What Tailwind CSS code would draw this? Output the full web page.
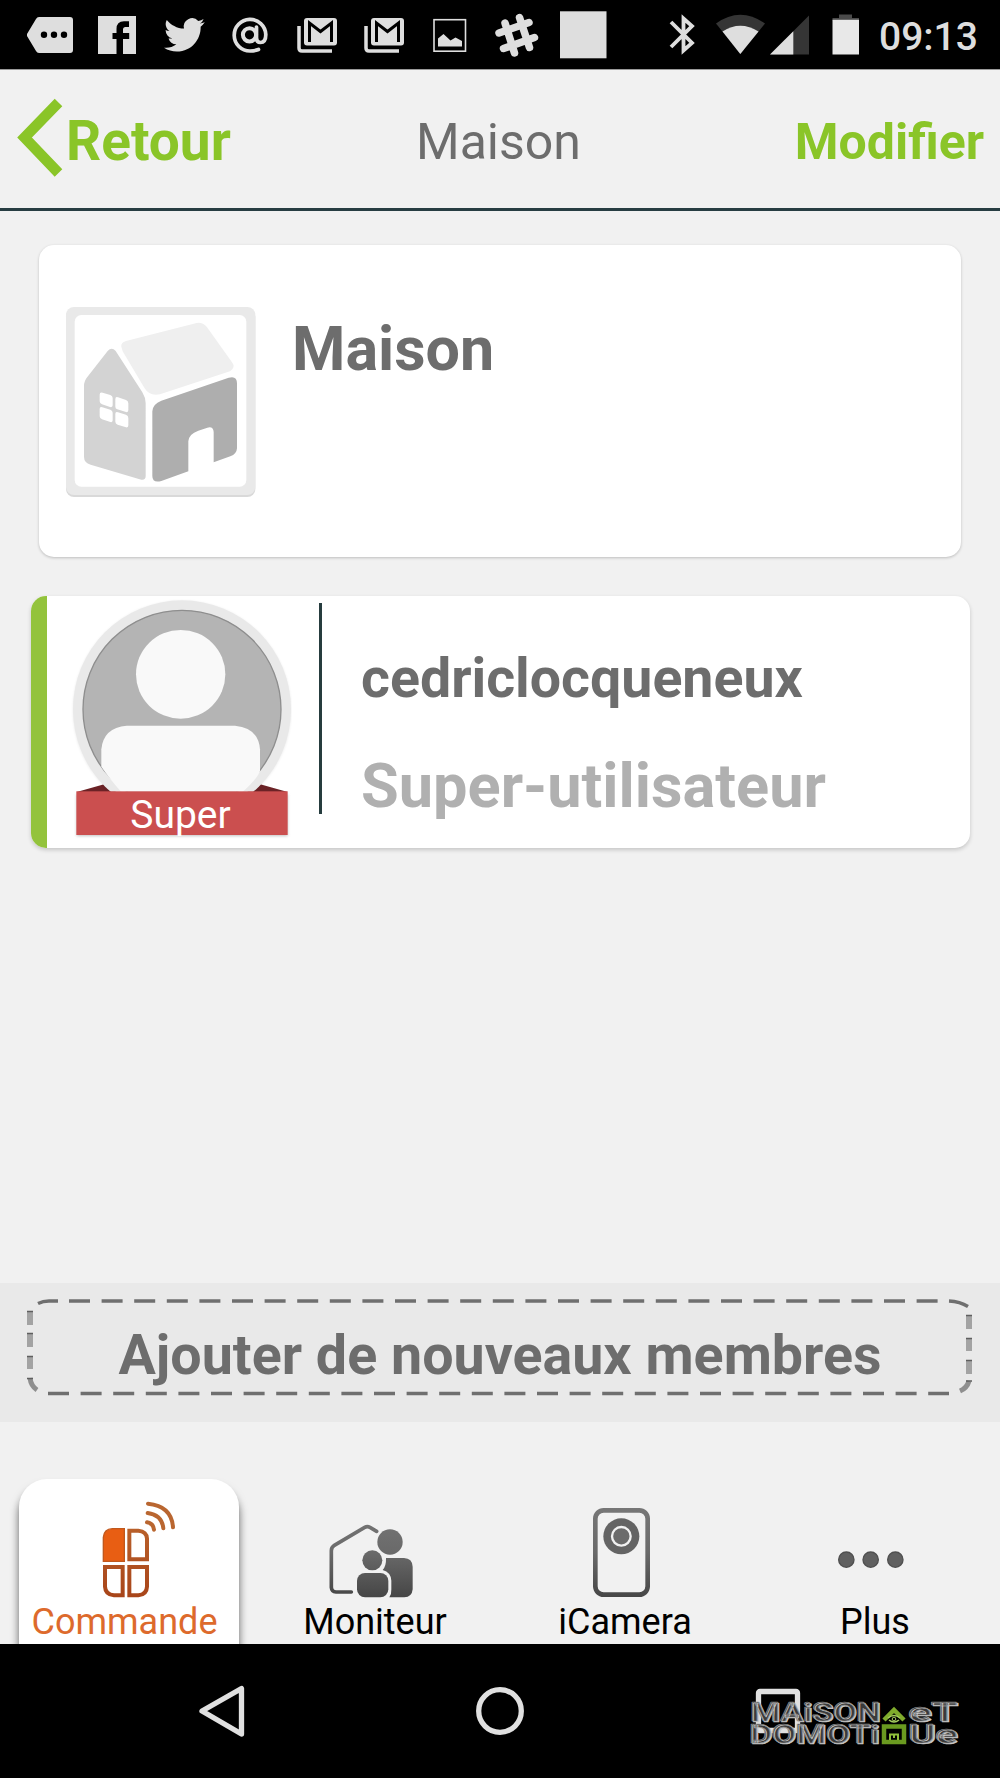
<!DOCTYPE html>
<html lang="fr">
<head>
<meta charset="utf-8">
<title>Maison</title>
<script src="https://cdn.jsdelivr.net/npm/@tailwindcss/browser@4"></script>
</head>
<body class="w-[1000px] h-[1778px] overflow-hidden bg-[#f1f1f1] font-['Roboto',sans-serif] flex flex-col text-[#6d6d6d]">

<!-- Status bar -->
<div class="h-[70px] shrink-0 bg-black border-b border-[#9a9a9a] flex text-[#dedede]">
  <svg class="w-[85px] h-[69px] shrink-0" viewBox="0 0 85 69" fill="currentColor"><path d="M39 17H70a3 3 0 0 1 3 3V50a3 3 0 0 1-3 3H39a4 4 0 0 1-3-2L27 36v-2L36 19a4 4 0 0 1 3-2z"/><g fill="#000"><circle cx="44" cy="34.7" r="3.2"/><circle cx="54" cy="34.7" r="3.2"/><circle cx="64" cy="34.7" r="3.2"/></g></svg>
  <svg class="w-[65px] h-[69px] shrink-0" viewBox="85 0 65 69" fill="currentColor"><path d="M98 16H136V54H123V39H129.200V33H123V29.500Q123 27 125.500 27H129V21.200H124Q116.500 21.200 116.500 29V33H112.500V39H116.500V54H98z"/></svg>
  <svg class="w-[70px] h-[69px] shrink-0" viewBox="150 0 70 69" fill="currentColor"><path transform="translate(164 14.500) scale(1.700)" d="M23.953 4.57a10 10 0 01-2.825.775 4.958 4.958 0 002.163-2.723c-.951.555-2.005.959-3.127 1.184a4.92 4.92 0 00-8.384 4.482C7.69 8.095 4.067 6.13 1.64 3.162a4.822 4.822 0 00-.666 2.475c0 1.71.87 3.213 2.188 4.096a4.904 4.904 0 01-2.228-.616v.06a4.923 4.923 0 003.946 4.827 4.996 4.996 0 01-2.212.085 4.936 4.936 0 004.604 3.417 9.867 9.867 0 01-6.102 2.105c-.39 0-.779-.023-1.17-.067a13.995 13.995 0 007.557 2.209c9.053 0 13.998-7.496 13.998-13.985 0-.21 0-.42-.015-.63A9.935 9.935 0 0024 4.59z"/></svg>
  <svg class="w-[63px] h-[69px] shrink-0" viewBox="220 0 63 69" fill="none" stroke="currentColor" stroke-width="3.700" stroke-linecap="round"><path d="M258.500 49.500Q255 51 250 51A15.800 15.800 0 1 1 265.800 34.500C265.800 40 263.500 42.500 260.500 42.500Q256.500 42.500 256.500 38V27"/><circle cx="249.500" cy="34.800" r="6.600" stroke-width="4"/></svg>
  <svg class="w-[67px] h-[69px] shrink-0" viewBox="283 0 67 69"><path d="M299 26V48Q299 51 302 51H332" fill="none" stroke="currentColor" stroke-width="3.500"/><rect x="304" y="18" width="33" height="27.500" rx="3" fill="currentColor"/><path d="M309.500 42V23L320.500 31.500L331.500 23V42" fill="none" stroke="#000" stroke-width="3"/></svg>
  <svg class="w-[65px] h-[69px] shrink-0" viewBox="350 0 65 69"><path d="M366 26V48Q366 51 369 51H399" fill="none" stroke="currentColor" stroke-width="3.500"/><rect x="371" y="18" width="33" height="27.500" rx="3" fill="currentColor"/><path d="M376.500 42V23L387.500 31.500L398.500 23V42" fill="none" stroke="#000" stroke-width="3"/></svg>
  <svg class="w-[70px] h-[69px] shrink-0" viewBox="415 0 70 69"><rect x="434" y="19.700" width="31.500" height="31.500" fill="none" stroke="currentColor" stroke-width="1.600"/><path d="M438 46.500V38.500L443.500 34L450.500 40.500L455.500 37.500L462 41V46.500z" fill="currentColor"/></svg>
  <svg class="w-[65px] h-[69px] shrink-0" viewBox="485 0 65 69" stroke="currentColor" stroke-width="7.500" stroke-linecap="round"><path d="M505 23L514.500 53M519.500 17.500L529.500 47.500M499 33L529 22.500M503.500 48.500L534.500 37.500"/></svg>
  <svg class="w-[70px] h-[69px] shrink-0" viewBox="550 0 70 69"><rect x="560" y="11.300" width="46.500" height="47" fill="currentColor"/></svg>
  <svg class="w-[90px] h-[69px] shrink-0" viewBox="620 0 90 69" fill="none"><path d="M671 22L692 43L683.500 50.500V18.500L692 26L671 47" stroke="currentColor" stroke-width="3.800"/></svg>
  <svg class="w-[60px] h-[69px] shrink-0" viewBox="710 0 60 69"><path d="M740.300 54L716 23.500Q740.300 6 765 23.500z" fill="#353535"/><path d="M740.300 54L722.500 31.500Q740.300 20 758.500 31.500z" fill="currentColor"/></svg>
  <svg class="w-[50px] h-[69px] shrink-0" viewBox="770 0 50 69"><path d="M809 15.500V54.500H770z" fill="#353535"/><path d="M793.300 31.200V54.500H770z" fill="currentColor"/></svg>
  <svg class="w-[59px] h-[69px] shrink-0" viewBox="820 0 59 69"><path d="M839 14.500H852V18H859V20.500H832.500V18H839z" fill="#4a4a4a"/><rect x="832.500" y="19.800" width="26.500" height="34.700" fill="#e8e8e8"/></svg>
  <span class="text-[39px] leading-[74px] font-medium">09:13</span>
</div>

<!-- Header -->
<header class="h-[141px] shrink-0 border-b-[3px] border-[#273d42] flex items-center pt-1 relative">
  <svg class="w-[66px] h-[90px] shrink-0 -mt-[6px]" viewBox="0 93 66 90"><path d="M58.500 102.500L24.500 137.500L58.500 173" fill="none" stroke="#8ac528" stroke-width="10.500"/></svg>
  <span class="text-[55px] leading-none font-bold text-[#8ac528] w-[350px]">Retour</span>
  <span class="text-[50px] leading-none mt-px">Maison</span>
  <span class="text-[50px] leading-none font-bold text-[#8ac528] ml-auto mr-[16px] mt-px">Modifier</span>
</header>

<main class="h-[1072px] shrink-0 pt-[34px]">
  <!-- Home card -->
  <section class="ml-[39px] w-[922px] h-[312px] bg-white rounded-[15px] shadow-[0_1px_3px_rgba(0,0,0,0.22)] flex">
    <svg class="w-[200px] h-[200px] mt-[58px] ml-[21px] shrink-0" viewBox="120 219 600 600">
      <rect x="138" y="236" width="568" height="565" rx="24" fill="#d9d9d9"/>
      <rect x="138" y="231" width="568" height="564" rx="24" fill="#e9e9e9"/>
      <rect x="164" y="255" width="515" height="515" rx="20" fill="#fff"/>
      <path d="M304 350Q302 338 318 333L530 279Q547 276 560 290L636 397Q648 412 630 424L420 493Q388 500 372 472L308 364Z" fill="#efefef"/>
      <path fill-rule="evenodd" d="M263 363Q275 350 287 363L367 487Q377 503 377 520V738Q377 751 364 749L212 704Q192 698 192 680V468Q192 453 202 441ZM239 494Q239 485 248 488L271 495Q278 498 278 504V526Q278 533 270 531L246 523Q239 520 239 514ZM286 508Q286 499 294 502L318 510Q325 513 325 520V540Q325 548 318 546L292 538Q286 536 286 530ZM239 537Q239 529 247 532L271 539Q278 542 278 548V571Q278 578 271 576L246 568Q239 565 239 559ZM286 552Q286 544 294 547L318 554Q325 557 325 564V586Q325 594 318 592L293 584Q286 581 286 575Z" fill="#d3d3d3"/>
      <path d="M397 544Q398 522 424 512L626 443Q651 436 651 460V655Q650 672 631 679L581 697V606Q580 588 562 593L535 602Q506 612 505 634V724L424 753Q397 760 397 738Z" fill="#aeaeae"/>
    </svg>
    <h1 class="text-[61px] leading-[60px] font-bold mt-[74px] ml-[32px]">Maison</h1>
  </section>

  <!-- Member card -->
  <section class="mt-[39px] ml-[31px] w-[939px] h-[252px] bg-white rounded-[15px] shadow-[0_2px_4px_rgba(0,0,0,0.18)] flex overflow-clip">
    <div class="w-[16px] bg-[#93c33c] shrink-0"></div>
    <svg class="w-[222px] h-[245px] mt-[2px] ml-[23px] shrink-0" viewBox="150 51 666 735">
      <defs>
        <clipPath id="top"><rect x="150" y="51" width="670" height="581"/></clipPath>
        <filter id="soft"><feGaussianBlur stdDeviation="5"/></filter>
      </defs>
      <path d="M170 633L255 609L290 634ZM803 633L718 609L680 634Z" fill="#6b2226"/>
      <g clip-path="url(#top)">
        <circle cx="486" cy="387" r="326" fill="#000" opacity="0.100" filter="url(#soft)"/>
        <circle cx="486" cy="385" r="327" fill="#e9e9e9"/>
        <circle cx="486" cy="385" r="297" fill="#b4b4b4" stroke="#8e8e8e" stroke-width="4"/>
        <ellipse cx="482" cy="280" rx="134" ry="133" fill="#f9f9f9"/>
        <path d="M244 557V505Q250 440 320 434H645Q715 440 720 505V570Q715 590 660 640H310Q270 595 244 557Z" fill="#f9f9f9"/>
      </g>
      <rect x="170" y="640" width="633" height="125" fill="#999" opacity="0.600" filter="url(#soft)"/>
      <rect x="169" y="631" width="634" height="131" fill="#cb4f4f"/>
      <text x="331" y="742" font-size="117" fill="#fff" textLength="301" lengthAdjust="spacingAndGlyphs" font-family="Roboto">Super</text>
    </svg>
    <div class="w-[3px] h-[211px] mt-[7px] ml-[27px] bg-[#263c3e] shrink-0"></div>
    <div class="ml-[39px] mt-[53px] flex flex-col">
      <span class="text-[55.5px] leading-[60px] font-bold">cedriclocqueneux</span>
      <span class="text-[61.3px] leading-[60px] font-bold text-[#b0b0b0] mt-[47px]">Super-utilisateur</span>
    </div>
  </section>
</main>

<!-- Add members -->
<button class="relative h-[139px] shrink-0 w-full bg-[#e9e9e9] flex justify-center">
  <svg class="absolute inset-0 w-[1000px] h-[139px]" viewBox="0 1283 1000 139" fill="none">
    <g stroke="#6f6f6f" stroke-width="3.400">
      <path d="M69 1301H938" stroke-dasharray="21 11.600"/>
      <path d="M48 1393.500H949" stroke-dasharray="21 11.600"/>
      <path d="M38 1303.500Q43 1301 49 1301H58M949 1301Q960 1301.500 968 1306.500"/>
    </g>
    <g stroke="#a3a3a3" stroke-width="6">
      <path d="M30 1311V1325M30 1333V1347M30 1356V1369"/>
      <path d="M969 1315V1329M969 1338V1351M969 1360V1374"/>
      <path d="M30 1378Q31 1386 37 1390M969 1381Q967 1388 960 1391" stroke="#8f8f8f" stroke-width="5"/>
    </g>
    <path d="M27 1311.500H33M27 1333.500H33M27 1356.500H33M27 1378.500H33M966 1315.500H972M966 1338.500H972M966 1360.500H972M966 1381H972" stroke="#5f5f5f" stroke-width="1.500"/>
  </svg>
  <span class="relative text-[55.6px] leading-[60px] font-bold mt-[42px] whitespace-nowrap">Ajouter de nouveaux membres</span>
</button>

<!-- Tabs -->
<nav class="h-[222px] shrink-0 grid grid-cols-4 text-black text-[36px] leading-[40px] text-center pt-[57px] overflow-hidden">
  <div class="ml-[19px] w-[220px] h-[200px] bg-white rounded-t-[28px] shadow-[0_8px_8px_rgba(0,0,0,0.6)] pt-[11px] text-[#dd6a2c]">
    <svg class="w-[220px] h-[120px] block" viewBox="57 90 660 360">
      <defs>
        <linearGradient id="or" x1="0" y1="200" x2="0" y2="412" gradientUnits="userSpaceOnUse"><stop offset="0" stop-color="#b9602a"/><stop offset="1" stop-color="#a8451a"/></linearGradient>
      </defs>
      <path d="M310 304V232Q312 207 337 206H373V304Z" fill="#e85e13" stroke="#c0581d" stroke-width="4"/>
      <g fill="none" stroke="url(#or)" stroke-width="12">
        <path d="M388 298V212H415Q440 214 441 236V298Z"/>
        <path d="M315 321H368V406H342Q316 404 315 380Z"/>
        <path d="M388 321H441V380Q440 404 415 406H388Z"/>
      </g>
      <g fill="none" stroke="#b96630" stroke-width="12" stroke-linecap="round"><path d="M444 131Q515 138 519 202M443 159Q486 165 490 205M441 187Q460 190 462 209"/></g>
    </svg>
    <div class="pr-[9px] -mt-[8px]">Commande</div>
  </div>
  <div class="pt-[11px]">
    <svg class="w-[250px] h-[120px] block" viewBox="750 90 750 360">
      <defs><linearGradient id="gr" x1="0" y1="140" x2="0" y2="412" gradientUnits="userSpaceOnUse"><stop offset="0" stop-color="#777"/><stop offset=".5" stop-color="#6a6a6a"/><stop offset="1" stop-color="#464646"/></linearGradient></defs>
      <path d="M1130 214L1110 202Q1102 198 1094 202L1003 256Q994 262 994 272V382Q995 395 1008 396H1054" fill="none" stroke="url(#gr)" stroke-width="11" stroke-linecap="round"/>
      <circle cx="1170" cy="246" r="38" fill="url(#gr)"/>
      <circle cx="1117" cy="301" r="30" fill="url(#gr)"/>
      <path d="M1158 294H1212Q1237 295 1238 320V388Q1236 411 1213 412H1168Q1175 402 1174 388V362Q1173 337 1148 330Q1159 318 1158 294Z" fill="url(#gr)"/>
      <rect x="1071" y="339" width="94" height="73" rx="24" fill="url(#gr)"/>
    </svg>
    <div class="-mt-[8px]">Moniteur</div>
  </div>
  <div class="pt-[11px]">
    <svg class="w-[250px] h-[120px] block" viewBox="0 90 750 360">
      <rect x="286" y="151" width="157" height="253" rx="25" fill="none" stroke="url(#gr)" stroke-width="14"/>
      <circle cx="364" cy="229" r="54" fill="#646464"/>
      <circle cx="364" cy="229" r="28" fill="#6b6b6b" stroke="#f1f1f1" stroke-width="7"/>
    </svg>
    <div class="-mt-[8px]">iCamera</div>
  </div>
  <div class="pt-[11px]">
    <svg class="w-[250px] h-[120px] block" viewBox="750 90 750 360" fill="#606060" stroke="#505050" stroke-width="4"><circle cx="1039" cy="299" r="23"/><circle cx="1112" cy="299" r="23"/><circle cx="1186" cy="299" r="23"/></svg>
    <div class="-mt-[8px]">Plus</div>
  </div>
</nav>

<!-- System navigation -->
<div class="relative z-10 h-[134px] shrink-0 bg-black">
  <svg class="w-[1000px] h-[134px] block" viewBox="0 1644 1000 134" fill="none" stroke="#e0e0e0" stroke-width="5.300" stroke-linejoin="round">
    <path d="M202 1711L241.500 1688.500V1734Z"/>
    <circle cx="500" cy="1711" r="21.300"/>
    <rect x="758.500" y="1691.500" width="39" height="39" rx="1.500"/>
    <g class="[text-shadow:1px_1px_0_#c8c8c8]" font-family="Roboto" font-weight="700" font-size="25" fill="#3a3a3a" stroke="#8c8c8c" stroke-width="0.700">
      <text x="750" y="1721" textLength="130" lengthAdjust="spacingAndGlyphs">MAiSON</text>
      <text x="908" y="1721" textLength="49" lengthAdjust="spacingAndGlyphs">eT</text>
      <text x="749" y="1743" textLength="130" lengthAdjust="spacingAndGlyphs">DOMOTi</text>
      <text x="908" y="1743" textLength="49" lengthAdjust="spacingAndGlyphs">Ue</text>
    </g>
    <g stroke="#7fab2c" stroke-linejoin="miter">
      <path d="M884 1720L894 1710L904 1720" stroke-width="4.500"/>
      <path d="M888 1718Q894 1713 900 1718M889 1720Q894 1724 899 1720" stroke="#a5cc5e" stroke-width="1.500"/>
      <circle cx="894" cy="1719" r="1.800" stroke="#a5cc5e" stroke-width="1"/>
      <rect x="884" y="1726.500" width="20" height="15.500" stroke="#6a9a20" stroke-width="4.500"/>
      <path d="M890 1740V1734.500H898V1740M894 1734V1738" stroke="#8fbf3a" stroke-width="2"/>
    </g>
  </svg>
</div>
</body>
</html>
